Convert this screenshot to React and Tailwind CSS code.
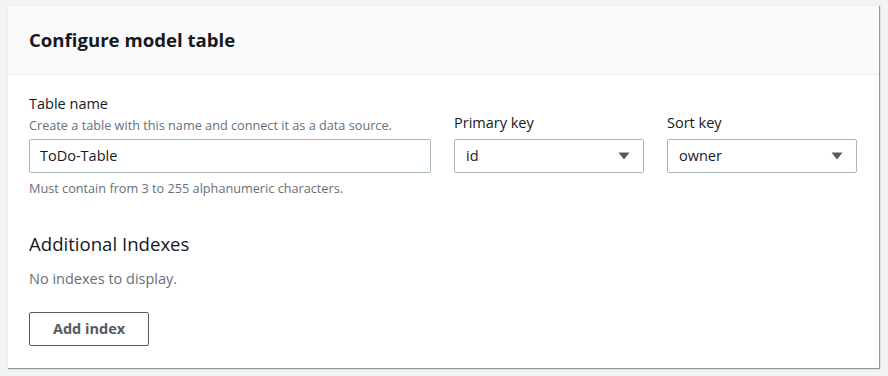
import React from 'react'

const font = { fontFamily: '"Open Sans", "Liberation Sans", sans-serif' }

function Caret() {
  return (
    <svg width="12" height="8" viewBox="0 0 12 8" className="shrink-0">
      <path d="M0.5 0.5 L11.5 0.5 L6 7.5 Z" fill="#545b64" />
    </svg>
  )
}

function Select({ value }) {
  return (
    <div className="flex h-[34px] items-center justify-between rounded-[2px] border border-[#aab7b8] bg-white pl-[11px] pr-[13px] text-[14.5px] text-[#16191f]">
      <span>{value}</span>
      <Caret />
    </div>
  )
}

export default function App() {
  return (
    <div className="min-h-screen bg-[#f2f3f3] pl-[7px] pt-[5px]" style={font}>
      <div className="w-[872px] border-t border-l border-[#eaeded] bg-white shadow-[1px_1px_1px_0_rgba(0,28,36,0.3),1px_1px_1px_0_rgba(0,28,36,0.15)]">
        {/* header */}
        <div className="flex h-[69px] items-center border-b border-[#eaeded] bg-[#fafafa] px-[21px]">
          <h2 className="text-[18.6px] font-bold leading-none text-[#16191f]">Configure model table</h2>
        </div>

        {/* body */}
        <div className="px-[21px] pt-[18px] pb-[22px]">
          <div className="grid grid-cols-[402px_190px_190px] gap-x-[23px]">
            <div className="flex flex-col">
              <div className="text-[14.5px] leading-[22px] text-[#16191f]">Table name</div>
              <div className="text-[12.7px] leading-[20px] text-[#687078]">
                Create a table with this name and connect it as a data source.
              </div>
            </div>
            <div className="flex items-end pb-[1px] text-[14.5px] leading-[22px] text-[#16191f]">Primary key</div>
            <div className="flex items-end pb-[1px] text-[14.5px] leading-[22px] text-[#16191f]">Sort key</div>

            <div className="mt-[4px] flex h-[34px] items-center rounded-[2px] border border-[#aab7b8] bg-white px-[10px] text-[14.5px] text-[#16191f]">
              ToDo-Table
            </div>
            <div className="mt-[4px]">
              <Select value="id" />
            </div>
            <div className="mt-[4px]">
              <Select value="owner" />
            </div>
          </div>
          <div className="mt-[7px] text-[12.7px] leading-[16px] text-[#687078]">
            Must contain from 3 to 255 alphanumeric characters.
          </div>

          <h3 className="mt-[37px] text-[18.6px] leading-[22px] text-[#16191f]">Additional Indexes</h3>
          <p className="mt-[13px] text-[14.5px] leading-[22px] text-[#687078]">No indexes to display.</p>

          <button className="mt-[22px] flex h-[34px] w-[120px] items-center justify-center rounded-[2px] border border-[#545b64] bg-white text-[14.5px] font-bold text-[#545b64]">
            Add index
          </button>
        </div>
      </div>
    </div>
  )
}
